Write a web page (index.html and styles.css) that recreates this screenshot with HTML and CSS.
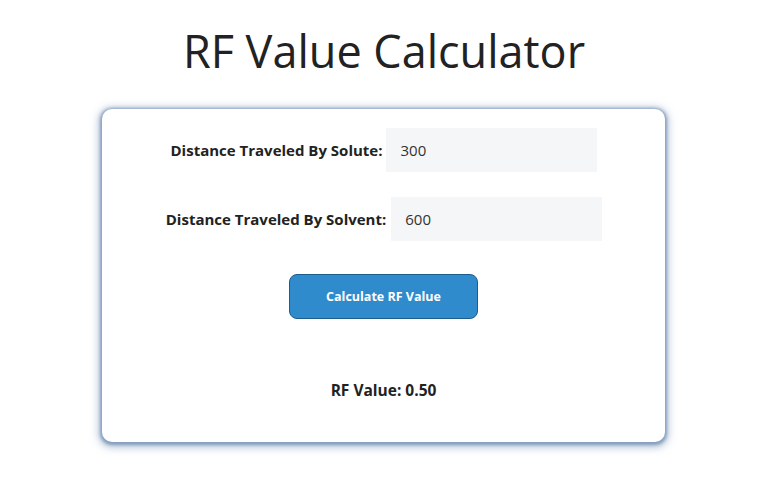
FILE: index.html
```html
<!DOCTYPE html>
<html lang="en">
<head>
<meta charset="utf-8">
<title>RF Value Calculator</title>
<link rel="stylesheet" href="styles.css">
</head>
<body>
<h1 class="title">RF Value Calculator</h1>
<div class="card">
  <div class="row row-solute">
    <label class="label" for="solute">Distance Traveled By Solute:</label>
    <input class="field" id="solute" type="text" value="300">
  </div>
  <div class="row row-solvent">
    <label class="label" for="solvent">Distance Traveled By Solvent:</label>
    <input class="field" id="solvent" type="text" value="600">
  </div>
  <div class="actions">
    <button class="btn" type="button">Calculate RF Value</button>
  </div>
  <div class="result">RF Value: 0.50</div>
</div>
</body>
</html>
```
FILE: styles.css
```css
html, body {
  margin: 0;
  padding: 0;
  background: #ffffff;
}
body {
  font-family: "Open Sans", "Noto Sans", sans-serif;
  color: #222222;
  width: 768px;
  height: 480px;
  overflow: hidden;
}
.title {
  margin: 22px 0 0;
  text-align: center;
  font-weight: 400;
  font-size: 45px;
  line-height: 58px;
  color: #222;
}
.card {
  margin: 29px 0 0 102px;
  width: 563px;
  height: 333px;
  box-sizing: border-box;
  background: #fff;
  border-radius: 10px;
  box-shadow: 0 1px 3px 2px rgba(100, 130, 170, 0.6), 0 2px 9px 3px rgba(110, 140, 180, 0.55);
  padding-top: 19px;
  display: flex;
  flex-direction: column;
  align-items: center;
}
.row {
  display: flex;
  align-items: center;
  gap: 4px;
  margin-left: 1px;
}
.row-solvent {
  margin-top: 25px;
  gap: 5px;
}
.label {
  font-weight: 700;
  font-size: 15px;
  color: #222;
}
.field {
  width: 211px;
  height: 44px;
  box-sizing: border-box;
  border: none;
  background: #f5f6f8;
  padding: 0 14px;
  font-family: inherit;
  font-size: 15px;
  color: #333;
  outline: none;
}
.actions {
  margin-top: 33px;
}
.btn {
  width: 189px;
  height: 45px;
  box-sizing: border-box;
  background: #2f8bcb;
  border: 1.5px solid #1d5d8e;
  border-radius: 8px;
  color: #fff;
  font-family: inherit;
  font-weight: 700;
  font-size: 12.5px;
}
.result {
  margin-top: 60px;
  font-weight: 700;
  font-size: 15.5px;
  color: #222;
}
```
